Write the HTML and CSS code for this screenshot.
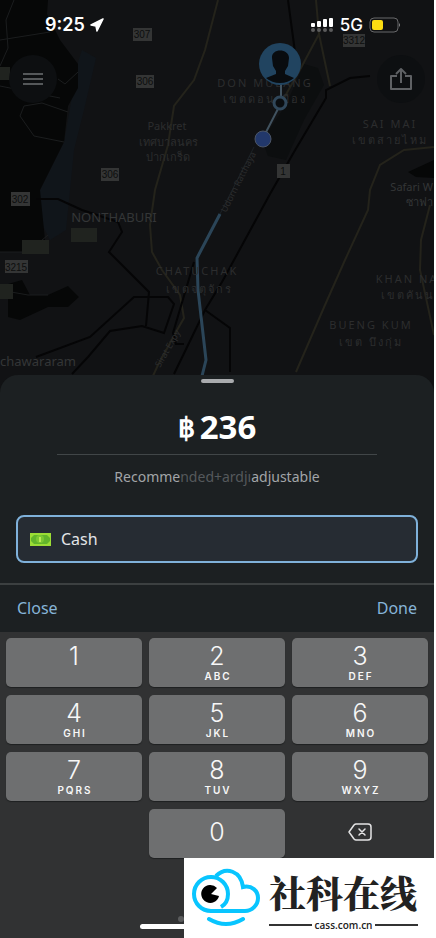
FILE: index.html
```html
<!DOCTYPE html>
<html lang="en">
	<head>
		<meta charset="utf-8">
		<meta name="viewport" content="width=device-width, initial-scale=1">
		<title>Fare</title>
		<link rel="stylesheet" href="styles.css">
	</head>
	<body>
		<div class="screen">
			<header class="map-area">
				<svg class="map" viewBox="0 0 434 396" preserveAspectRatio="xMidYMin slice" aria-hidden="true">
					<rect width="434" height="396" fill="#111214"/>
					<!-- dark land and river -->
					<path class="river" d="M78 62L82 50L96 58L84 110L74 150L66 230L50 240L40 220L40 190L64 142Z"/>
					<path class="land" d="M0 0H48L47 14L60 40L78 64V88L68 106L64 142L40 190L45 240L30 252L0 252Z"/>
					<path class="land" d="M8 284L22 280L30 295H48L68 286L79 297L68 307H48L20 320L8 317Z"/>
					<path class="airport" d="M304 64L318 68L324 85L304 120L286 160L268 156L262 140L286 105Z"/>
					<path class="land" d="M408 172L434 160V178L416 177Z"/>
					<!-- side roads -->
					<path class="lane" d="M14 0L6 20L8 48L0 66M0 40L50 32M68 112L42 103L24 106L20 116L34 136L64 142M0 86L30 92L60 98M58 79L65 84L78 72M0 252H28L48 235M0 290L28 295H48"/>
					<path class="yellow" d="M218 0L205 50L194 80L174 106L168 145L155 190L150 225L152 252L162 270L180 295L184 318L176 332L158 365L152 378M316 0L319 34L330 86M319 34L302 66L284 98M434 147L404 150L380 165L370 190L368 210L345 260L325 305L296 372M430 205L421 240L420 270L434 335"/>
					<!-- highways -->
					<path class="road" d="M36 199H58L82 210L118 222L122 232L109 252L149 292L146 326M36 357L90 337L134 297H168L174 304L164 333L142 326L110 331L88 357L72 374"/>
					<path class="road" d="M288 0L295 52M370 76L350 78L326 90L326 98L294 152L270 194L222 282L205 310L174 374M205 310L230 328V372M194 262L173 333L176 344H184"/>
					<path class="road-thin" d="M254 147L218 218"/>
					<path class="route" d="M220 214L197 258L198 290L206 360L202 376"/>
					<!-- road numbers -->
					<g class="shield">
						<rect x="133" y="28" width="19" height="13"/><rect x="136" y="75" width="18" height="13"/><rect x="101" y="168" width="18" height="13"/><rect x="11" y="192" width="19" height="14"/><rect x="5" y="260" width="23" height="13"/><rect x="343" y="34" width="22" height="13"/><rect x="277" y="164" width="13" height="14"/>
					</g>
					<g class="patch">
						<rect x="22" y="240" width="27" height="14"/><rect x="0" y="284" width="13" height="15"/><rect x="0" y="67" width="10" height="13"/><rect x="71" y="228" width="26" height="14"/>
					</g>
					<g class="number">
						<text x="142" y="38">307</text><text x="145" y="85">306</text><text x="110" y="178">306</text><text x="20" y="203">302</text><text x="16" y="271">3215</text><text x="354" y="44">3312</text><text x="283" y="175">1</text>
					</g>
					<g class="place">
						<text x="167" y="130">Pakkret</text><text x="168" y="146">เทศบาลนคร</text><text x="168" y="161">ปากเกร็ด</text>
						<text class="safari" x="433" y="191">Safari W</text><text class="safari" x="433" y="206">ซาฟา</text>
						<text class="wide" x="265" y="87">DON MUEANG</text><text class="wide" x="265" y="103">เขตดอนเมือง</text>
						<text class="wide" x="390" y="128">SAI MAI</text><text class="wide" x="390" y="144">เขตสายไหม</text>
						<text class="wide" x="197" y="275">CHATUCHAK</text><text class="wide" x="199" y="293">เขตจตุจักร</text>
						<text class="wide" x="407" y="283">KHAN NA</text><text class="wide" x="408" y="299">เขตคันน</text>
						<text class="wide" x="371" y="329">BUENG KUM</text><text class="wide" x="371" y="346">เขต บึงกุ่ม</text>
						<text class="town" x="114" y="222">NONTHABURI</text>
						<text class="town" x="38" y="366">chawararam</text>
						<text class="small" transform="translate(160 368) rotate(-60)">Sirat Expy</text>
						<text class="small" transform="translate(226 213) rotate(-63)">Udorn Ratthaya</text>
					</g>
					<!-- pickup point -->
					<path d="M281 82V103L263 138" fill="none" stroke="#41525f" stroke-width="2"/>
					<circle cx="280" cy="64" r="21" fill="#214460"/>
					<path d="M272 58C271 48 289 48 289 58L288 66L285 71V74L294 78Q288 83 280 83Q272 83 266 78L276 74V71L273 66Z" fill="#090c0f"/>
					<circle cx="280" cy="103" r="6" fill="#0a0d10" stroke="#30475a" stroke-width="3"/>
					<circle cx="263" cy="139" r="8" fill="#22386b" stroke="#4b5566" stroke-width="1"/>
				</svg>
				<div class="status-bar">
					<div class="clock">9:25
						<svg width="14" height="14" viewBox="0 0 14 14"><path d="M13 1L1 7L6 8L7 13Z" fill="#fff" stroke="#fff" stroke-width="1.5" stroke-linejoin="round"/></svg>
					</div>
					<div class="signal">
						<svg width="24" height="16" viewBox="0 0 24 16">
							<g fill="#fff"><rect x="1" y="6" width="4" height="4" rx="1"/><rect x="7" y="4" width="4" height="6" rx="1"/><rect x="13" y="2" width="4" height="8" rx="1"/><rect x="19" y="1" width="4" height="9" rx="1"/></g>
							<g fill="#5b5b5c"><circle cx="3" cy="13" r="2"/><circle cx="9" cy="13" r="2"/><circle cx="15" cy="13" r="2"/><circle cx="21" cy="13" r="2"/></g>
						</svg>
						<span>5G</span>
						<svg width="32" height="16" viewBox="0 0 32 16">
							<rect x="1" y="1" width="28" height="14" rx="4" fill="none" stroke="#68686a"/>
							<rect x="3" y="3" width="11" height="10" rx="2" fill="#fbdc12"/>
							<path d="M30 6Q32 8 30 10Z" fill="#88888a"/>
						</svg>
					</div>
				</div>
				<div class="map-buttons">
					<button class="round" aria-label="Menu">
						<svg width="22" height="14" viewBox="0 0 22 14"><path d="M1 2H21M1 7H21M1 12H21" stroke="#55585a" stroke-width="2"/></svg>
					</button>
					<button class="round" aria-label="Share">
						<svg width="22" height="24" viewBox="0 0 22 24"><path d="M7 9H1V22H21V9H15M11 16V2M6 7L11 2L16 7" fill="none" stroke="#5f6164" stroke-width="2" stroke-linejoin="round"/></svg>
					</button>
				</div>
			</header>

			<main class="sheet">
				<div class="handle"></div>
				<div class="fare"><span class="baht">฿</span><span>236</span></div>
				<p class="hint">Recomme<span class="faded">nded+ardjı</span>adjustable</p>
				<button class="payment">
					<svg width="21" height="13" viewBox="0 0 21 13">
						<rect width="21" height="13" fill="#9bdd35"/>
						<path d="M4 2H17L20 5V8L17 11H4L1 8V5Z" fill="#62b52b"/>
						<circle cx="10" cy="6" r="4" fill="#7cc832"/>
						<path d="M10 4V9" stroke="#b9ec55" stroke-width="2"/>
					</svg>
					Cash
				</button>
			</main>

			<div class="toolbar">
				<button>Close</button>
				<button>Done</button>
			</div>

			<div class="keypad">
				<button class="key">1</button>
				<button class="key">2<small>ABC</small></button>
				<button class="key">3<small>DEF</small></button>
				<button class="key">4<small>GHI</small></button>
				<button class="key">5<small>JKL</small></button>
				<button class="key">6<small>MNO</small></button>
				<button class="key">7<small>PQRS</small></button>
				<button class="key">8<small>TUV</small></button>
				<button class="key">9<small>WXYZ</small></button>
				<button class="key zero">0</button>
				<button class="key delete" aria-label="Delete">
					<svg width="24" height="18" viewBox="0 0 24 18" fill="none" stroke="#e4e4e5" stroke-linejoin="round" stroke-linecap="round">
						<path d="M8 1H20Q23 1 23 4V14Q23 17 20 17H8Q7 17 6 16L1 9L6 2Q7 1 8 1Z" stroke-width="1.5"/>
						<path d="M11 6L17 12M17 6L11 12" stroke-width="1.5"/>
					</svg>
				</button>
			</div>
			<div class="mic-dot"></div>
			<div class="home-bar"></div>
		</div>

		<!-- site logo, over the corner of the screen -->
		<a class="watermark" href="#">
			<svg width="70" height="62" viewBox="0 0 70 62">
				<g fill="none" stroke="#08c5ff" stroke-width="4">
					<path d="M25 9C35 -1 50 4 52 20C61 18 67 24 67 31C67 38 61 44 54 44H20A17 17 0 1 1 37 27Q37 36 30 40"/>
					<path d="M18 52Q35 62 52 52" stroke-linecap="round"/>
				</g>
				<path d="M20 27L26 21A9 9 0 1 0 28 29Z" fill="#000"/>
			</svg>
			<span class="brand">
				<span class="brand-name">社科在线</span>
				<span class="brand-url">cass.com.cn</span>
			</span>
		</a>
	</body>
</html>
```
FILE: styles.css
```css
* {
	box-sizing: border-box;
}

body {
	margin: 0;
	background: #fff;
	font-family: "Noto Sans", "Open Sans", sans-serif;
	color: #fff;
}

button {
	border: 0;
	padding: 0;
	background: none;
	color: inherit;
	font: inherit;
}

svg {
	display: block;
}

.screen {
	display: flex;
	flex-direction: column;
	min-height: 100vh;
	margin-right: 2px;
	background: #313233;
}

/* map */
.map-area {
	position: relative;
	min-height: 375px;
	background: #111214;
}

.map {
	position: absolute;
	left: 0;
	top: 0;
	width: 100%;
	height: 396px;
}

.land { fill: #060707; }
.airport { fill: #0c0e0f; }
.river { fill: #10151a; }
.lane, .yellow, .road, .road-thin, .route { fill: none; }
.lane { stroke: #1b1d1e; }
.yellow { stroke: #24231b; stroke-width: 2; }
.road { stroke: #050506; stroke-width: 2; }
.road-thin { stroke: #1d2226; }
.route { stroke: #2b4558; stroke-width: 3; }
.shield { fill: #343535; }
.patch { fill: #20231f; }

.number {
	fill: #0d0e0e;
	font: 10px "Liberation Sans", sans-serif;
	text-anchor: middle;
}

.place {
	fill: #2c2d2e;
	font-size: 11px;
	text-anchor: middle;
}

.place .wide { letter-spacing: 2px; }
.place .town { font-size: 13px; }

.place .town,
.place .safari {
	fill: #343637;
}

.place .safari { text-anchor: end; }

.place .small {
	font-size: 9px;
	text-anchor: start;
}

.status-bar,
.map-buttons {
	position: relative;
	display: flex;
	align-items: center;
	justify-content: space-between;
}

.status-bar {
	padding: 13px 33px 0 45px;
	font: 600 18px/24px Inter, sans-serif;
}

.clock,
.signal {
	display: flex;
	align-items: center;
	gap: 5px;
}

.signal {
	gap: 6px;
	font-size: 17px;
	font-weight: 500;
}

.map-buttons {
	padding: 18px 9px;
}

.round {
	display: flex;
	align-items: center;
	justify-content: center;
	width: 48px;
	height: 48px;
	border-radius: 50%;
	background: #0d0f11;
}

/* fare sheet */
.sheet {
	position: relative;
	padding: 4px 16px 20px;
	border-radius: 18px 18px 0 0;
	background: #1c2022;
}

.handle {
	width: 33px;
	height: 4px;
	margin: 0 auto;
	border-radius: 2px;
	background: #a9abae;
}

.fare {
	display: flex;
	justify-content: center;
	align-items: center;
	gap: 5px;
	margin: 20px 41px 0;
	padding-bottom: 3px;
	border-bottom: 1px solid #414648;
	font-size: 33px;
	font-weight: 700;
	line-height: 48px;
}

.baht {
	font-size: 27px;
}

.hint {
	margin: 12px 0 28px;
	color: #a2a5a8;
	font-size: 14px;
	line-height: 20px;
	text-align: center;
}

.faded {
	color: #55595c;
}

.payment {
	display: flex;
	align-items: center;
	gap: 10px;
	width: 100%;
	height: 48px;
	padding: 0 12px;
	border: 2px solid #7fb1da;
	border-radius: 8px;
	background: #262c33;
	color: #e3e5e7;
	font-size: 16px;
}

.toolbar {
	display: flex;
	justify-content: space-between;
	padding: 0 17px;
	border-top: 2px solid #3c4041;
	background: #1c2022;
	color: #86b4d8;
	font-size: 16px;
	line-height: 47px;
}

/* number pad */
.keypad {
	display: grid;
	grid-template-columns: repeat(3, 1fr);
	gap: 8px 7px;
	padding: 6px 6px 0;
	font-family: Inter, sans-serif;
}

.key {
	display: flex;
	flex-direction: column;
	align-items: center;
	height: 49px;
	padding-top: 4px;
	border-radius: 5px;
	background: #6e6f70;
	box-shadow: 0 1px 1px #1f2021;
	color: #f7f7f7;
	font-size: 25px;
	font-weight: 300;
	line-height: 28px;
}

.key small {
	padding-left: 2px;
	font-size: 10px;
	font-weight: 600;
	letter-spacing: 2px;
	line-height: 12px;
}

.zero,
.delete {
	justify-content: center;
	padding: 0 0 3px;
}

.zero {
	grid-column: 2;
}

.delete {
	background: none;
	box-shadow: none;
}

.mic-dot {
	width: 6px;
	height: 6px;
	margin: 58px auto 0 178px;
	border-radius: 50%;
	background: #5b5c5d;
}

.home-bar {
	width: 154px;
	height: 5px;
	margin: 2px auto 12px;
	border-radius: 3px;
	background: #fff;
}

.watermark {
	position: fixed;
	right: 0;
	bottom: 0;
	display: flex;
	align-items: center;
	gap: 8px;
	width: 252px;
	height: 80px;
	padding: 0 18px 0 7px;
	background: #fff;
	color: #222;
	text-decoration: none;
}

.brand {
	display: flex;
	flex: 1;
	flex-direction: column;
}

.brand-name {
	font: 900 37px/54px "Noto Serif CJK SC", "Noto Sans CJK SC", serif;
	white-space: nowrap;
}

.brand-url {
	display: flex;
	align-items: center;
	gap: 3px;
	font: 600 10px/12px "Open Sans", sans-serif;
}

.brand-url::before,
.brand-url::after {
	content: "";
	flex: 1;
	height: 2px;
	background: #333;
}
```
